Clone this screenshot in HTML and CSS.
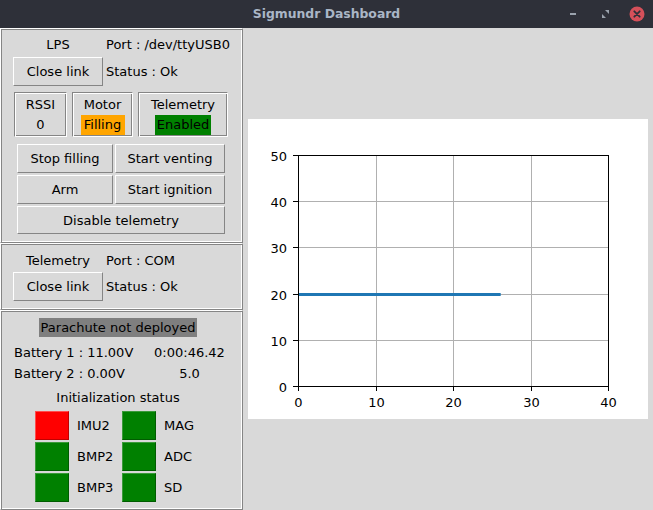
FILE: index.html
```html
<!DOCTYPE html>
<html>
<head>
<meta charset="utf-8">
<title>Sigmundr Dashboard</title>
<link rel="stylesheet" href="styles.css">
</head>
<body>
<div class="window">
  <header class="titlebar">
    <span class="title">Sigmundr Dashboard</span>
    <svg class="controls" width="84" height="28" viewBox="0 0 84 28">
      <rect x="8" y="13" width="6" height="2" fill="#9aa2ad"/>
      <polygon points="43,10 47,10 47,14" fill="#9aa2ad"/>
      <polygon points="40,14 40,18 44,18" fill="#9aa2ad"/>
      <circle cx="75" cy="14" r="7.5" fill="#d5505a"/>
      <path d="M72.3 11.3 L77.7 16.7 M77.7 11.3 L72.3 16.7" stroke="#2e3039" stroke-width="1.8" stroke-linecap="round"/>
    </svg>
  </header>
  <main class="main">
    <aside class="sidebar">
      <section class="frame frame-lps">
        <div class="link-grid">
          <div class="cell-center">LPS</div>
          <div>Port : /dev/ttyUSB0</div>
          <button class="btn">Close link</button>
          <div>Status : Ok</div>
        </div>
        <div class="status-boxes">
          <div class="box box-rssi"><span class="box-line">RSSI</span><span class="box-line">0</span></div>
          <div class="box box-motor"><span class="box-line">Motor</span><span class="tag tag-orange">Filling</span></div>
          <div class="box box-tel"><span class="box-line">Telemetry</span><span class="tag tag-green">Enabled</span></div>
        </div>
        <div class="actions">
          <button class="btn">Stop filling</button>
          <button class="btn">Start venting</button>
          <button class="btn">Arm</button>
          <button class="btn">Start ignition</button>
          <button class="btn span2">Disable telemetry</button>
        </div>
      </section>
      <section class="frame frame-tel">
        <div class="link-grid link-grid-tel">
          <div class="cell-center">Telemetry</div>
          <div>Port : COM</div>
          <button class="btn">Close link</button>
          <div>Status : Ok</div>
        </div>
      </section>
      <section class="frame frame-status">
        <div class="parachute">Parachute not deployed</div>
        <div class="battery-grid">
          <div>Battery 1 : 11.00V</div>
          <div class="cell-center">0:00:46.42</div>
          <div>Battery 2 : 0.00V</div>
          <div class="cell-center">5.0</div>
        </div>
        <div class="init-title">Initialization status</div>
        <div class="init-grid">
          <div class="led led-red"></div><div class="led-label">IMU2</div>
          <div class="led led-green"></div><div class="led-label">MAG</div>
          <div class="led led-green"></div><div class="led-label">BMP2</div>
          <div class="led led-green"></div><div class="led-label">ADC</div>
          <div class="led led-green"></div><div class="led-label">BMP3</div>
          <div class="led led-green"></div><div class="led-label">SD</div>
        </div>
      </section>
    </aside>
    <div class="plot-area">
      <svg class="plot" width="400" height="300" viewBox="0 0 400 300">
        <rect x="0" y="0" width="400" height="300" fill="#ffffff"/>
        <g stroke="#b0b0b0" stroke-width="1" shape-rendering="crispEdges">
          <line x1="128.5" y1="36" x2="128.5" y2="267"/>
          <line x1="205.5" y1="36" x2="205.5" y2="267"/>
          <line x1="283.5" y1="36" x2="283.5" y2="267"/>
          <line x1="50" y1="82.5" x2="360" y2="82.5"/>
          <line x1="50" y1="128.5" x2="360" y2="128.5"/>
          <line x1="50" y1="175.5" x2="360" y2="175.5"/>
          <line x1="50" y1="221.5" x2="360" y2="221.5"/>
        </g>
        <line x1="50" y1="175.5" x2="252.7" y2="175.5" stroke="#1f77b4" stroke-width="2.8"/>
        <g stroke="#000" stroke-width="1" shape-rendering="crispEdges" fill="none">
          <rect x="50.5" y="36.5" width="310" height="231"/>
          <line x1="50.5" y1="267" x2="50.5" y2="272"/>
          <line x1="128.5" y1="267" x2="128.5" y2="272"/>
          <line x1="205.5" y1="267" x2="205.5" y2="272"/>
          <line x1="283.5" y1="267" x2="283.5" y2="272"/>
          <line x1="360.5" y1="267" x2="360.5" y2="272"/>
          <line x1="45" y1="36.5" x2="50" y2="36.5"/>
          <line x1="45" y1="82.5" x2="50" y2="82.5"/>
          <line x1="45" y1="128.5" x2="50" y2="128.5"/>
          <line x1="45" y1="175.5" x2="50" y2="175.5"/>
          <line x1="45" y1="221.5" x2="50" y2="221.5"/>
          <line x1="45" y1="267.5" x2="50" y2="267.5"/>
        </g>
        <g class="tick-y" text-anchor="end">
          <text x="39" y="42">50</text>
          <text x="39" y="88">40</text>
          <text x="39" y="134">30</text>
          <text x="39" y="181">20</text>
          <text x="39" y="227">10</text>
          <text x="39" y="273">0</text>
        </g>
        <g class="tick-x" text-anchor="middle">
          <text x="50.5" y="288">0</text>
          <text x="128.5" y="288">10</text>
          <text x="205.5" y="288">20</text>
          <text x="283.5" y="288">30</text>
          <text x="360.5" y="288">40</text>
        </g>
      </svg>
    </div>
  </main>
</div>
</body>
</html>
```
FILE: styles.css
```css
* { box-sizing: border-box; }
html, body {
  margin: 0;
  padding: 0;
}
body {
  width: 653px;
  height: 510px;
  overflow: hidden;
  background: #d9d9d9;
  font-family: "DejaVu Sans", "Noto Sans", sans-serif;
  font-size: 13px;
  color: #000;
}
.window {
  display: flex;
  flex-direction: column;
  width: 653px;
  height: 510px;
}
.titlebar {
  height: 28px;
  background: #2e3039;
  display: grid;
  grid-template-columns: 1fr auto 1fr;
  align-items: center;
}
.title {
  grid-column: 2;
  color: #aab6c6;
  font-weight: bold;
  font-size: 12.4px;
  line-height: 28px;
}
.controls {
  grid-column: 3;
  justify-self: end;
  margin-right: 7px;
  display: block;
}
.main {
  flex: 1;
  display: flex;
}
.sidebar {
  width: 243px;
  display: flex;
  flex-direction: column;
}
.frame {
  border: 1px solid;
  border-color: #ffffff #858585 #858585 #ffffff;
  box-shadow: inset 1px 1px 0 #858585, inset -1px -1px 0 #ffffff;
  padding: 1px;
}
.frame-lps { height: 215px; }
.frame-tel { height: 67px; }
.frame-status { height: 200px; }

.btn {
  font-family: inherit;
  font-size: 13px;
  color: #000;
  background: #d9d9d9;
  border: 1px solid;
  border-color: #ffffff #858585 #858585 #ffffff;
  padding: 0;
  margin: 0;
}
.link-grid {
  display: grid;
  grid-template-columns: 90px auto;
  grid-template-rows: 25px 29px;
  column-gap: 3px;
  align-items: center;
  margin: 2px 0 0 11px;
}
.link-grid .btn { height: 29px; }
.link-grid-tel {
  grid-template-rows: 23px 29px;
  margin-top: 4px;
}
.cell-center { text-align: center; }

.status-boxes {
  display: flex;
  gap: 5px;
  margin: 6px 0 0 12px;
  height: 45px;
}
.box {
  height: 45px;
  display: flex;
  flex-direction: column;
  align-items: center;
  justify-content: center;
  border: 1px solid;
  border-color: #858585 #ffffff #ffffff #858585;
  box-shadow: inset 1px 1px 0 #ffffff, inset -1px -1px 0 #858585;
}
.box-rssi { width: 53px; }
.box-motor { width: 61px; }
.box-tel { width: 90px; }
.box-line {
  height: 20px;
  line-height: 20px;
}
.tag {
  height: 20px;
  line-height: 20px;
  padding: 0 1px;
}
.tag-orange { background: #ffa500; width: 44px; text-align: center; }
.tag-green { background: #008000; width: 56px; text-align: center; }

.actions {
  display: grid;
  grid-template-columns: 96px 110px;
  grid-template-rows: 29px 29px 28px;
  gap: 2px;
  margin: 7px 0 0 15px;
}
.span2 { grid-column: 1 / span 2; }

.parachute {
  margin: 6px 0 0 37px;
  width: 158px;
  height: 19px;
  line-height: 19px;
  background: #7f7f7f;
  text-align: center;
}
.battery-grid {
  display: grid;
  grid-template-columns: 130px 91px;
  grid-template-rows: 21px 21px;
  align-items: center;
  margin: 5px 0 0 12px;
}
.init-title {
  width: 232px;
  height: 22px;
  line-height: 22px;
  margin-top: 3px;
  text-align: center;
}
.init-grid {
  display: grid;
  grid-template-columns: 34px 53px 34px auto;
  grid-template-rows: 29px 29px 29px;
  row-gap: 2px;
  margin: 2px 0 0 33px;
  align-items: center;
}
.led {
  height: 29px;
  border: 1px solid;
}
.led-red {
  background: #ff0000;
  border-color: #ff4d4d #c00000 #c00000 #ff4d4d;
}
.led-green {
  background: #008000;
  border-color: #3a9a3a #005c00 #005c00 #3a9a3a;
}
.led-label { padding-left: 8px; }

.plot-area {
  flex: 1;
  display: flex;
  align-items: center;
  justify-content: center;
}
.plot { display: block; }
.plot text {
  font-family: "DejaVu Sans", sans-serif;
  font-size: 13px;
  fill: #000;
}
```
